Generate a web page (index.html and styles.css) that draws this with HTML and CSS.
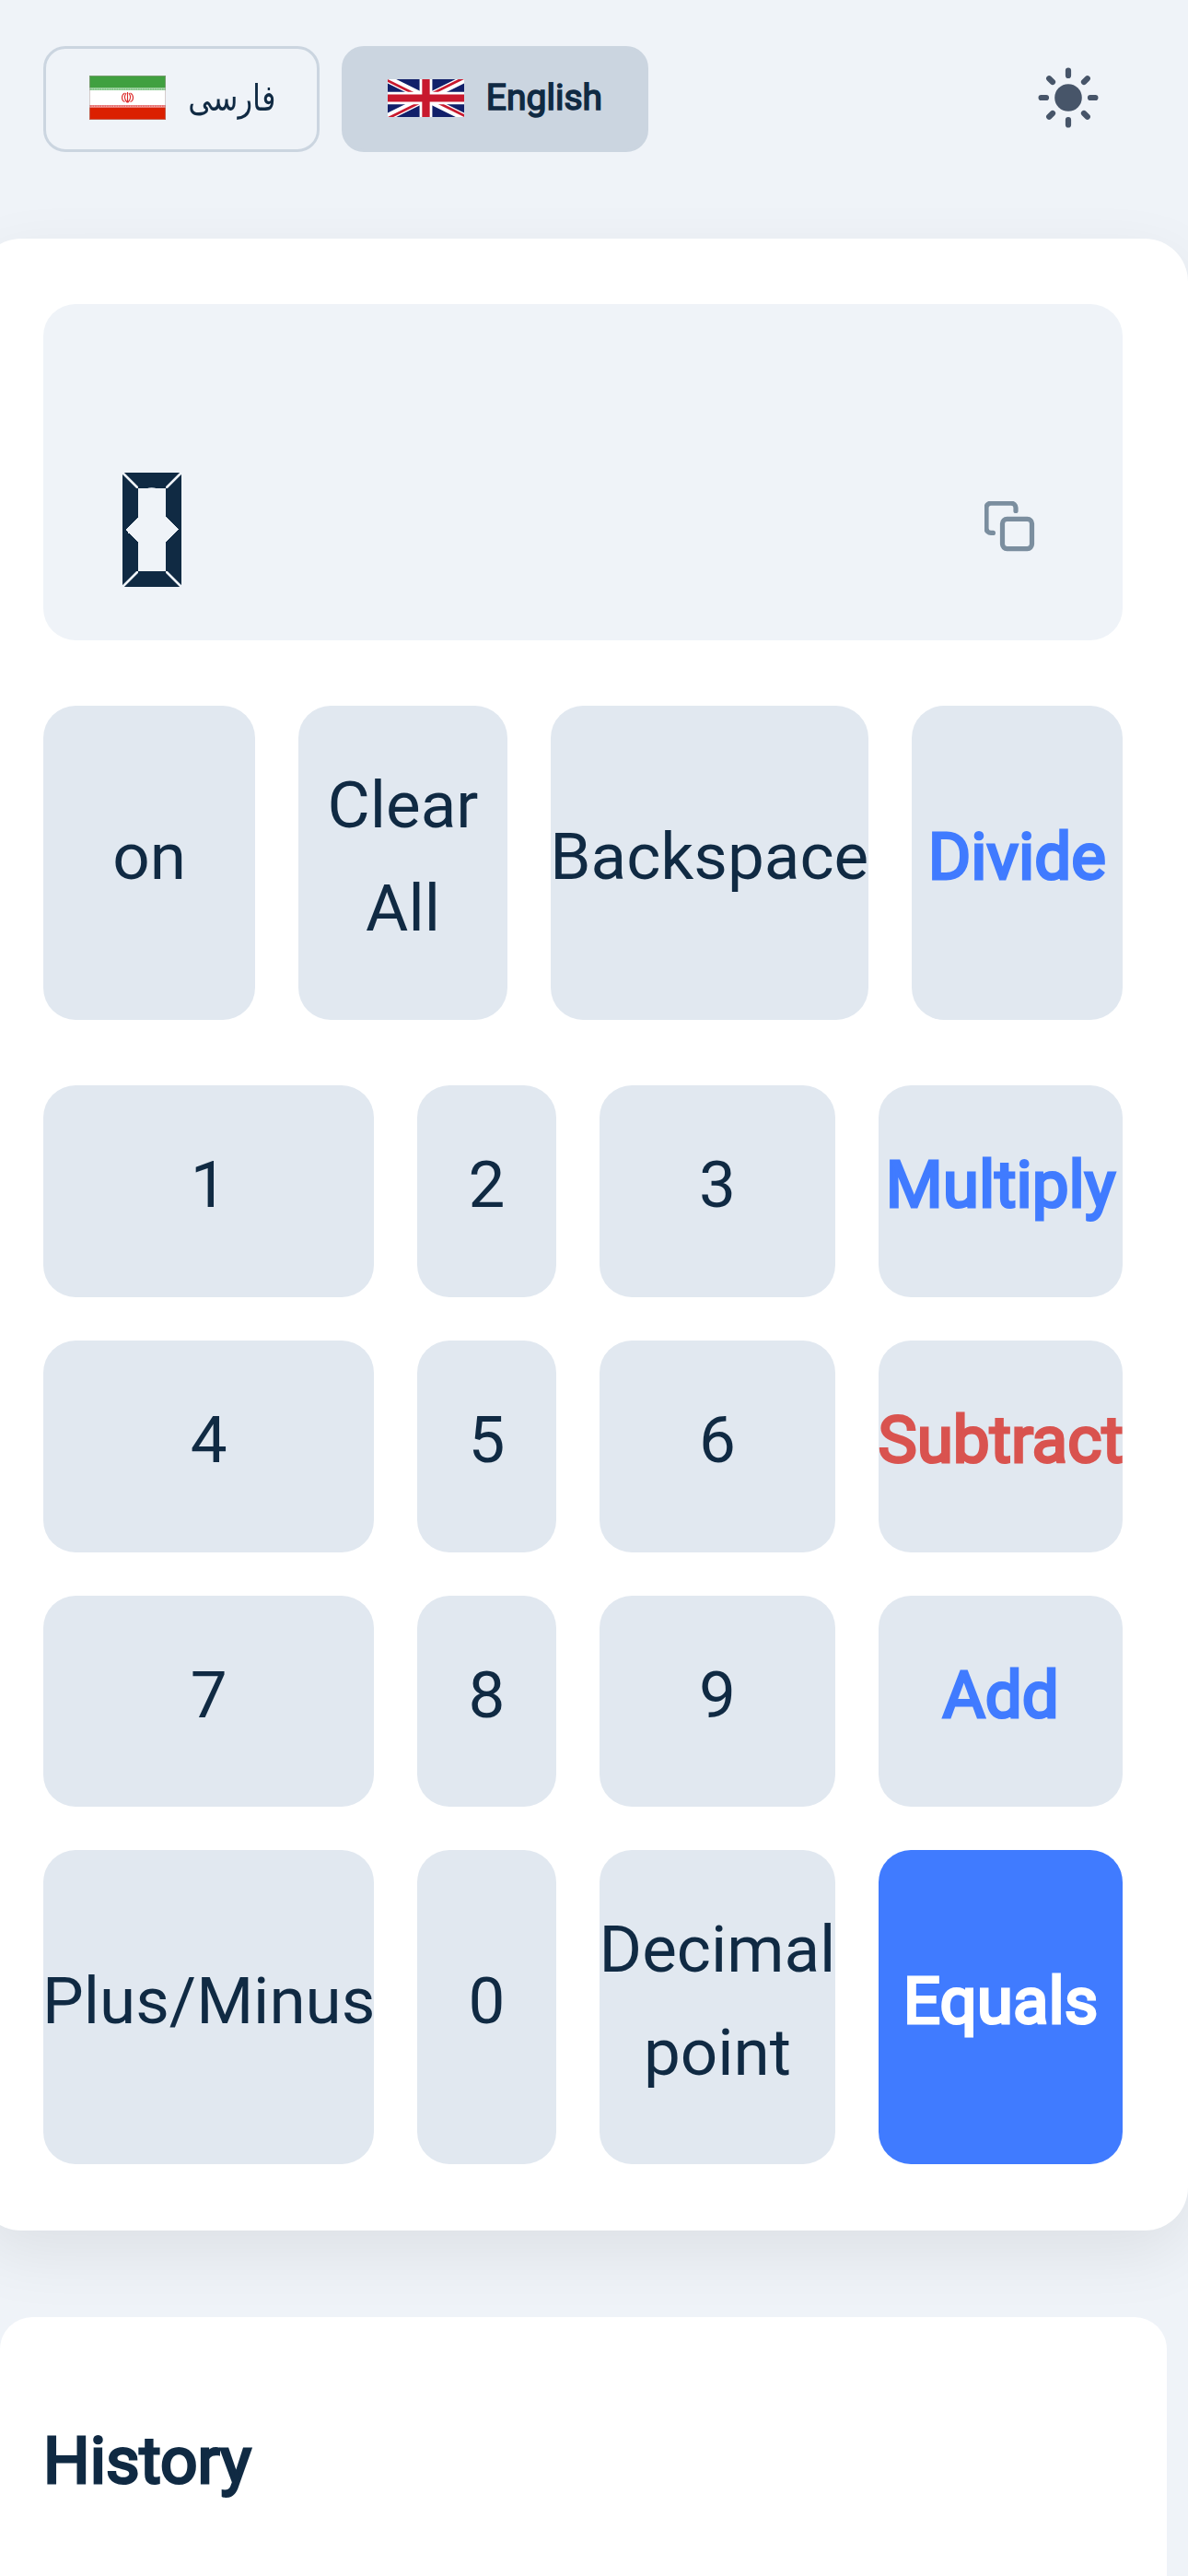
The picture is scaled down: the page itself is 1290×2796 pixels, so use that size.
FILE: index.html
```html
<!DOCTYPE html>
<html lang="en">
<head>
<meta charset="utf-8">
<title>Calculator</title>
<link rel="stylesheet" href="styles.css">
</head>
<body>
<header class="topbar">
  <div class="languages">
    <button class="language">
      <svg class="flag-ir" viewBox="0 0 83 48">
        <rect width="83" height="48" fill="#fff"/>
        <rect width="83" height="13.5" fill="#40a040"/>
        <rect y="34.5" width="83" height="13.5" fill="#db2000"/>
        <path d="M0 14.8H83" stroke="#86c88c" stroke-width="2.6"/>
        <path d="M0 33.2H83" stroke="#e87474" stroke-width="2.6"/>
        <path d="M0 14.8H83M0 33.2H83" stroke="#fff" stroke-width="1" stroke-dasharray="1 1.6" opacity=".6"/>
        <path d="M41.500 18V29.500M38.500 19C34.500 21 34.500 27 38.500 28.600M40 19C38 22 38 26 41 29M44.500 19C48.500 21 48.500 27 44.500 28.600M43 19C45 22 45 26 42 29" fill="none" stroke="#dc2b2b" stroke-width="1.1"/>
        <rect x=".5" y=".5" width="82" height="47" fill="none" stroke="#a99" opacity=".5"/>
      </svg>
      <span class="persian" lang="fa">فارسی</span>
    </button>
    <button class="language active">
      <svg class="flag-gb" viewBox="0 0 60 30" preserveAspectRatio="none">
        <clipPath id="field"><path d="M0 0H60V30H0Z"/></clipPath>
        <clipPath id="saltire"><path d="M30 15H60V30ZM30 15V30H0ZM30 15H0V0ZM30 15V0H60Z"/></clipPath>
        <g clip-path="url(#field)">
          <path d="M0 0H60V30H0Z" fill="#11206a"/>
          <path d="M0 0L60 30M60 0L0 30" stroke="#fff" stroke-width="6"/>
          <path d="M0 0L60 30M60 0L0 30" clip-path="url(#saltire)" stroke="#c8192e" stroke-width="4"/>
          <path d="M30 0V30M0 15H60" stroke="#fff" stroke-width="10"/>
          <path d="M30 0V30M0 15H60" stroke="#c8192e" stroke-width="6"/>
        </g>
      </svg>
      <span>English</span>
    </button>
  </div>
  <button class="theme" aria-label="Theme">
    <svg class="sun" viewBox="-36 -36 72 72">
      <circle r="14.8"/>
      <path d="M0-29.400V-24M0 24V29.400M-29.400 0H-24M24 0H29.400M-20.800-20.800L-17-17M17 17L20.800 20.800M-20.800 20.800L-17 17M17-17L20.800-20.800"/>
    </svg>
  </button>
</header>

<main class="calculator">
  <section class="display">
    <output class="result"><span class="digit">0</span></output>
    <svg class="copy" viewBox="0 0 56 56">
      <rect x="19.500" y="19.300" width="32" height="32.300" rx="5"/>
      <path d="M34 10.500V7A5 5 0 0 0 29 2.200H7A5 5 0 0 0 2 7.200V29.400A5 5 0 0 0 7 34.400H9.400"/>
    </svg>
  </section>
  <div class="functions">
    <button class="key">on</button>
    <button class="key">Clear All</button>
    <button class="key">Backspace</button>
    <button class="key operator">Divide</button>
  </div>
  <div class="keypad">
    <button class="key">1</button><button class="key">2</button><button class="key">3</button>
    <button class="key operator">Multiply</button>
    <button class="key">4</button><button class="key">5</button><button class="key">6</button>
    <button class="key operator subtract">Subtract</button>
    <button class="key">7</button><button class="key">8</button><button class="key">9</button>
    <button class="key operator">Add</button>
    <button class="key">Plus/Minus</button><button class="key">0</button><button class="key">Decimal point</button>
    <button class="key operator equals">Equals</button>
  </div>
</main>

<section class="history">
  <h2 class="history-title">History</h2>
</section>
</body>
</html>
```

FILE: styles.css
```css
* { box-sizing: border-box; }
body {
  margin: 0;
  height: 2796px;
  overflow: hidden;
  background: #eff3f8;
  color: #102a43;
  font-family: Roboto, sans-serif;
}
button {
  margin: 0;
  padding: 0;
  border: 0;
  background: none;
  color: inherit;
  font-family: inherit;
}
.topbar {
  display: flex;
  justify-content: space-between;
  height: 259px;
  padding: 50px 94px 0 47px;
}
.languages { display: flex; gap: 24px; }
.language {
  display: flex;
  align-items: center;
  justify-content: space-between;
  width: 300px;
  height: 115px;
  padding: 0 47px;
  border: 3px solid #cbd5e0;
  border-radius: 24px;
  font-size: 39px;
}
.language.active {
  width: 333px;
  background: #cbd5e0;
  -webkit-text-stroke: 1.6px currentColor;
}
.language span { padding-bottom: 4px; }
.flag-ir { flex: none; width: 83px; height: 48px; margin-bottom: 4px; }
.flag-gb { flex: none; width: 83px; height: 41px; margin-bottom: 3px; }
.language .persian {
  margin-right: -2px;
  font-family: "DejaVu Sans", sans-serif;
  font-size: 40px;
  transform: scaleX(.81);
  transform-origin: 100% 50%;
}
.theme { width: 72px; height: 112px; margin-right: 0; }
.sun {
  display: block;
  width: 72px;
  height: 72px;
  fill: #475569;
  stroke: #475569;
}
.sun path { stroke-width: 6.2; stroke-linecap: round; }
.sun circle { stroke: none; }

.calculator {
  width: 1314px;
  height: 2162px;
  margin-left: -24px;
  padding: 71px;
  border-radius: 47px;
  background: #fff;
  box-shadow: 0 24px 71px rgba(0, 0, 0, .08);
}
.display {
  display: flex;
  align-items: flex-end;
  justify-content: space-between;
  height: 365px;
  padding: 0 94px 58px 86px;
  border-radius: 35px;
  background: #eff3f8;
}
/* Only the display segments show the digit: mitred corners, notched sides. */
.result {
  --miter: #000 calc(50% - 1.6px), transparent calc(50% - 1.1px) calc(50% + 1.1px), #000 calc(50% + 1.6px);
  display: flex;
  align-items: center;
  justify-content: center;
  width: 64px;
  height: 124px;
  mask:
    linear-gradient(45deg, var(--miter)) 0 0 / 17px 17px no-repeat,
    linear-gradient(-45deg, var(--miter)) 100% 0 / 17px 17px no-repeat,
    linear-gradient(-45deg, var(--miter)) 0 100% / 17px 17px no-repeat,
    linear-gradient(45deg, var(--miter)) 100% 100% / 17px 17px no-repeat,
    linear-gradient(#000, #000) 50% 0 / 30px 17px no-repeat,
    linear-gradient(#000, #000) 50% 100% / 30px 17px no-repeat,
    conic-gradient(from 45deg at 3px 50%, transparent 90deg, #000 0) 0 50% / 17px 90px no-repeat,
    conic-gradient(from 225deg at 14px 50%, transparent 90deg, #000 0) 100% 50% / 17px 90px no-repeat;
}
.digit {
  font-size: 206px;
  line-height: 124px;
  transform: translateY(3px);
  -webkit-text-stroke: 30px currentColor;
}
.copy {
  width: 56px;
  height: 56px;
  margin-bottom: 37px;
  fill: none;
  stroke: #7b8e9f;
  stroke-width: 5.2;
  stroke-linecap: round;
}
.functions {
  display: grid;
  grid-template-columns: 230px 227px 344.5px 229.500px;
  column-gap: 47px;
  height: 341px;
  margin-top: 71px;
}
.keypad {
  display: grid;
  grid-template-columns: 359.4px 150.3px 256.5px 264.800px;
  grid-template-rows: repeat(3, 229.8px) 341px;
  column-gap: 47px;
  row-gap: 47px;
  margin-top: 71px;
}
.key {
  display: flex;
  align-items: center;
  justify-content: center;
  min-width: 0;
  padding-bottom: 13.6px;
  border-radius: 35px;
  background: #e1e8f0;
  font-size: 71px;
  line-height: 112px;
}
.operator {
  color: #407bff;
  -webkit-text-stroke: 3px currentColor;
}
.subtract { color: #d9534f; }
.equals { background: #407bff; color: #fff; }

.history {
  width: 1267px;
  height: 400px;
  margin-top: 94px;
  padding: 92px 47px;
  border-radius: 35px;
  background: #fff;
}
.history-title {
  margin: 0;
  font-size: 71px;
  font-weight: 400;
  line-height: 127px;
  -webkit-text-stroke: 3px currentColor;
}
```
